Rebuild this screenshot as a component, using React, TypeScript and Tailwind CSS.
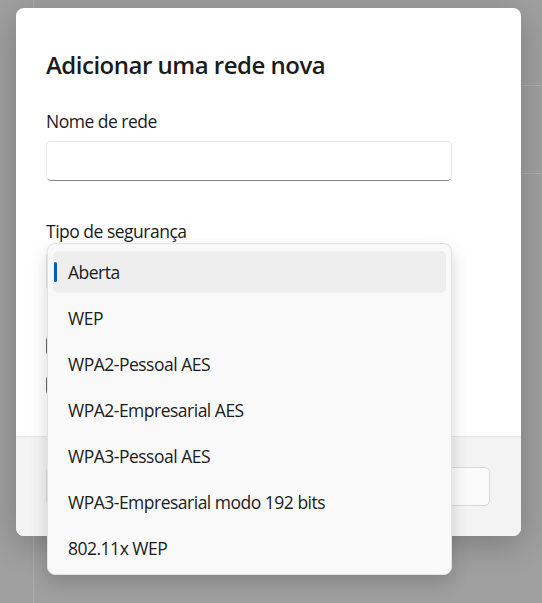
import React from 'react';

const options = [
  'Aberta',
  'WEP',
  'WPA2-Pessoal AES',
  'WPA2-Empresarial AES',
  'WPA3-Pessoal AES',
  'WPA3-Empresarial modo 192 bits',
  '802.11x WEP',
];

export default function App() {
  const selected = 0;

  return (
    <div className="relative h-[603px] w-[542px] overflow-hidden bg-[#9f9f9f] font-['Open_Sans','Noto_Sans',sans-serif] text-[#1b1b1b]">
      {/* window behind the dialog */}
      <div className="absolute left-[33px] top-[-2px] h-[700px] w-[600px] border-l border-[#acacac]">
        <div className="mt-[87px] h-[89px] border-y border-[#acacac]" />
      </div>

      {/* dialog */}
      <div className="absolute left-[16px] top-[8px] w-[505px] overflow-hidden rounded-[8px] bg-white shadow-[0_8px_32px_rgba(0,0,0,0.22)]">
        <div className="flex h-[428px] flex-col px-[30px] pt-[40px]">
          <h1 className="text-[24px] font-semibold leading-[34px] tracking-[-0.5px]">Adicionar uma rede nova</h1>

          <label className="mt-[27px] text-[17.5px] leading-[24px] tracking-[-0.5px]">Nome de rede</label>
          <div className="mt-[8px] h-[40px] w-[406px] rounded-[5px] border border-[#e5e5e5] border-b-[#868686] bg-white" />

          <label className="mt-[38px] text-[17.5px] leading-[24px] tracking-[-0.5px]">Tipo de segurança</label>
          <div className="mt-[8px] h-[40px] w-[406px] rounded-[5px] border border-[#e5e5e5] bg-[#fbfbfb]" />

          <div className="mt-[45px] h-[20px] w-[20px] rounded-[4px] border border-[#6e6e6e] bg-[#f7f7f7]" />
          <div className="mt-[19px] h-[20px] w-[20px] rounded-[4px] border border-[#6e6e6e] bg-[#f7f7f7]" />
        </div>

        <div className="flex h-[100px] gap-[8px] border-t border-[#e5e5e5] bg-[#f3f3f3] pl-[30px] pr-[31px] pt-[30px]">
          <div className="h-[39px] flex-1 rounded-[5px] border border-[#dcdcdc] bg-[#f7f7f7]" />
          <div className="h-[39px] flex-1 rounded-[5px] border border-[#d9d9d9] bg-[#fbfbfb]" />
        </div>
      </div>

      {/* open combobox list */}
      <div className="absolute left-[47px] top-[243px] flex w-[405px] flex-col rounded-[8px] border border-[#e2e2e2] bg-[#f9f9f9] pb-[3px] pt-[5px] shadow-[0_8px_18px_rgba(0,0,0,0.16)]">
        {options.map((o, i) => (
          <div
            key={o}
            className={`relative mx-[5px] my-[2px] flex h-[42px] items-center rounded-[5px] pl-[15px] text-[17.5px] tracking-[-0.5px] ${
              i === selected ? 'bg-[#eeeeee]' : ''
            }`}
          >
            {i === selected && <span className="absolute left-[1px] top-[11px] h-[20px] w-[3px] rounded-full bg-[#005fb8]" />}
            {o}
          </div>
        ))}
      </div>
    </div>
  );
}
